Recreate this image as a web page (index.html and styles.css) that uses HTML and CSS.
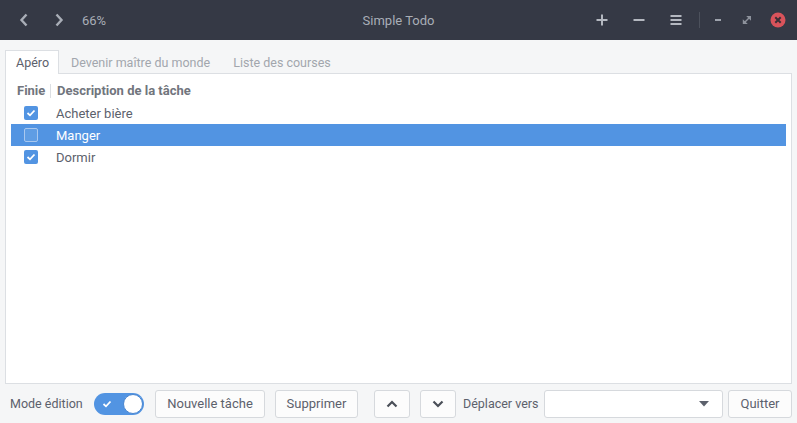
FILE: index.html
```html
<!DOCTYPE html>
<html lang="fr">
<head>
<meta charset="utf-8">
<title>Simple Todo</title>
<link rel="stylesheet" href="styles.css">
</head>
<body>
<div class="window">
  <header class="titlebar">
    <div class="tb-left">
      <span class="tb-icon nav">
        <svg width="10" height="14" viewBox="0 0 10 14"><path d="M7.5 1.5 L2.5 7 L7.5 12.5" fill="none" stroke="#a9aeb7" stroke-width="2.4"/></svg>
      </span>
      <span class="tb-icon nav">
        <svg width="10" height="14" viewBox="0 0 10 14"><path d="M2.5 1.5 L7.5 7 L2.5 12.5" fill="none" stroke="#a9aeb7" stroke-width="2.4"/></svg>
      </span>
      <span class="zoom">66%</span>
    </div>
    <div class="tb-title">Simple Todo</div>
    <div class="tb-right">
      <span class="tb-icon act">
        <svg width="12" height="12" viewBox="0 0 12 12"><path d="M6 0.5 V11.5 M0.5 6 H11.5" stroke="#b4b8c0" stroke-width="2"/></svg>
      </span>
      <span class="tb-icon act">
        <svg width="12" height="12" viewBox="0 0 12 12"><path d="M0.5 6 H11.5" stroke="#b4b8c0" stroke-width="2"/></svg>
      </span>
      <span class="tb-icon act">
        <svg width="12" height="12" viewBox="0 0 12 12"><path d="M0.5 2 H11.5 M0.5 6 H11.5 M0.5 10 H11.5" stroke="#b4b8c0" stroke-width="2"/></svg>
      </span>
      <span class="tb-sep"></span>
      <span class="tb-icon win">
        <svg width="8" height="8" viewBox="0 0 8 8"><path d="M1 4 H7" stroke="#9ea3ad" stroke-width="2"/></svg>
      </span>
      <span class="tb-icon win">
        <svg width="10" height="10" viewBox="0 0 10 10"><path d="M4.2 1 L9 5.8 L9 1 Z M0.8 4.2 L5.8 9 L0.8 9 Z" fill="#8d929c"/><path d="M2.5 7.5 L7.5 2.5" stroke="#8d929c" stroke-width="1.4"/></svg>
      </span>
      <span class="tb-icon close">
        <svg width="16" height="16" viewBox="0 0 16 16"><circle cx="8" cy="8" r="7.5" fill="#d9535b"/><path d="M5.3 5.3 L10.7 10.7 M10.7 5.3 L5.3 10.7" stroke="#3a2f36" stroke-width="2"/></svg>
      </span>
    </div>
  </header>

  <main class="content">
    <nav class="tabs">
      <span class="tab active">Apéro</span>
      <span class="tab">Devenir maître du monde</span>
      <span class="tab">Liste des courses</span>
    </nav>
    <section class="frame">
      <div class="list">
        <div class="row head">
          <div class="col-done">Finie</div>
          <div class="col-desc">Description de la tâche</div>
        </div>
        <div class="row">
          <div class="col-done"><span class="check on"><svg width="10" height="8" viewBox="0 0 10 8"><path d="M1.5 4 L4 6.3 L8.5 1.5" fill="none" stroke="#fff" stroke-width="1.8"/></svg></span></div>
          <div class="col-desc">Acheter bière</div>
        </div>
        <div class="row selected">
          <div class="col-done"><span class="check off"></span></div>
          <div class="col-desc">Manger</div>
        </div>
        <div class="row">
          <div class="col-done"><span class="check on"><svg width="10" height="8" viewBox="0 0 10 8"><path d="M1.5 4 L4 6.3 L8.5 1.5" fill="none" stroke="#fff" stroke-width="1.8"/></svg></span></div>
          <div class="col-desc">Dormir</div>
        </div>
      </div>
    </section>
  </main>

  <footer class="bottombar">
    <span class="label mode">Mode édition</span>
    <span class="switch">
      <svg class="switch-check" width="10" height="8" viewBox="0 0 10 8"><path d="M1.5 4 L4 6.3 L8.5 1.5" fill="none" stroke="#fff" stroke-width="1.8"/></svg>
      <span class="knob"></span>
    </span>
    <button class="btn b-new">Nouvelle tâche</button>
    <button class="btn b-del">Supprimer</button>
    <button class="btn b-arrow b-up">
      <svg width="12" height="8" viewBox="0 0 12 8"><path d="M1.5 6.5 L6 2 L10.5 6.5" fill="none" stroke="#4a4f58" stroke-width="2.2"/></svg>
    </button>
    <button class="btn b-arrow b-down">
      <svg width="12" height="8" viewBox="0 0 12 8"><path d="M1.5 1.5 L6 6 L10.5 1.5" fill="none" stroke="#4a4f58" stroke-width="2.2"/></svg>
    </button>
    <span class="label move">Déplacer vers</span>
    <span class="combo">
      <svg width="10" height="6" viewBox="0 0 10 6"><path d="M0 0 H10 L5 5.5 Z" fill="#5c616c"/></svg>
    </span>
    <button class="btn b-quit">Quitter</button>
  </footer>
</div>
</body>
</html>
```

FILE: styles.css
```css
* { box-sizing: border-box; }
html, body { margin: 0; padding: 0; }
body {
  width: 797px;
  height: 423px;
  overflow: hidden;
  background: #f5f6f7;
  font-family: Roboto, "Noto Sans", sans-serif;
  font-size: 13px;
  color: #5c616c;
}
.window { display: flex; flex-direction: column; height: 423px; }

.titlebar {
  height: 40px;
  flex-shrink: 0;
  background: #353945;
  display: grid;
  grid-template-columns: 1fr auto 1fr;
  align-items: center;
  color: #a9aeb7;
}
.tb-left { display: flex; align-items: center; padding-left: 19px; }
.tb-icon { display: flex; align-items: center; justify-content: center; }
.nav { width: 10px; height: 14px; margin-right: 25px; }
.nav + .nav { margin-right: 18px; }
.zoom { font-size: 13px; color: #a9aeb7; }
.tb-title { font-size: 13px; color: #a9aeb7; }
.tb-right { display: flex; align-items: center; justify-content: flex-end; padding-right: 11px; }
.act { width: 12px; height: 12px; margin-left: 25px; }
.act:first-child { margin-left: 0; }
.tb-sep { width: 1px; height: 16px; background: #4c515c; margin-left: 17px; }
.win { width: 10px; height: 10px; margin-left: 13px; }
.win + .win { margin-left: 19px; }
.close { width: 16px; height: 16px; margin-left: 18px; }

.content { display: flex; flex-direction: column; padding: 10px 5px 0 5px; flex-shrink: 0; }
.tabs { display: flex; height: 23px; align-items: flex-start; }
.tab {
  padding: 0 10px;
  margin-right: 1px;
  line-height: 23px;
  font-size: 12.5px;
  color: #a2a6ad;
  border: 1px solid transparent;
  border-bottom: none;
  white-space: nowrap;
}
.tab.active {
  width: 54px;
  color: #5c616c;
  background: #fff;
  border-color: #dcdfe3;
  height: 24px;
  position: relative;
  z-index: 1;
}
.frame {
  height: 311px;
  background: #fff;
  border: 1px solid #dcdfe3;
  padding: 5px;
}
.row { display: flex; align-items: center; height: 22px; white-space: nowrap; }
.row.head { height: 23px; font-weight: 700; color: #71757d; }
.col-done { width: 40px; display: flex; align-items: center; justify-content: center; }
.row.head .col-done { justify-content: flex-start; padding-left: 6px; border-right: 1px solid #dcdfe3; height: 14px; width: 40px; }
.row.head .col-desc { padding-left: 6px; }
.col-desc { padding-left: 5px; }
.row.selected { background: #5294e2; color: #fff; }
.check {
  width: 14px; height: 14px; border-radius: 2px;
  display: flex; align-items: center; justify-content: center;
}
.check.on { background: #5294e2; }
.check.off { border: 1px solid #a9c8ef; background: #5f9de4; }

.bottombar {
  flex: 1;
  display: flex;
  align-items: center;
  padding: 0 5px 0 10px;
  white-space: nowrap;
}
.bottombar > * { flex-shrink: 0; }
.label { color: #5c616c; font-size: 12.5px; }
.mode { width: 73px; margin-right: 11px; }
.switch {
  width: 50px; height: 22px; border-radius: 11px; background: #5294e2;
  display: flex; align-items: center; justify-content: space-between;
  padding: 0 1px 0 8px;
  margin-right: 11px;
}
.knob { width: 20px; height: 20px; border-radius: 50%; background: #fff; border: 1px solid #4a86d0; }
.btn {
  height: 28px;
  border: 1px solid #d6d9dd;
  border-radius: 3px;
  background: #fcfcfc;
  font-family: inherit;
  font-size: 13px;
  color: #5c616c;
  padding: 0;
  display: flex; align-items: center; justify-content: center;
}
.b-new { width: 110px; margin-right: 10px; }
.b-del { width: 83px; margin-right: 16px; }
.b-arrow { width: 36px; }
.b-up { margin-right: 10px; }
.b-down { margin-right: 7px; }
.move { width: 76px; margin-right: 5px; }
.combo {
  width: 179px; height: 28px;
  border: 1px solid #d6d9dd; border-radius: 3px; background: #fff;
  display: flex; align-items: center; justify-content: flex-end;
  padding-right: 13px;
  margin-right: 5px;
}
.b-quit { width: 64px; }
```
